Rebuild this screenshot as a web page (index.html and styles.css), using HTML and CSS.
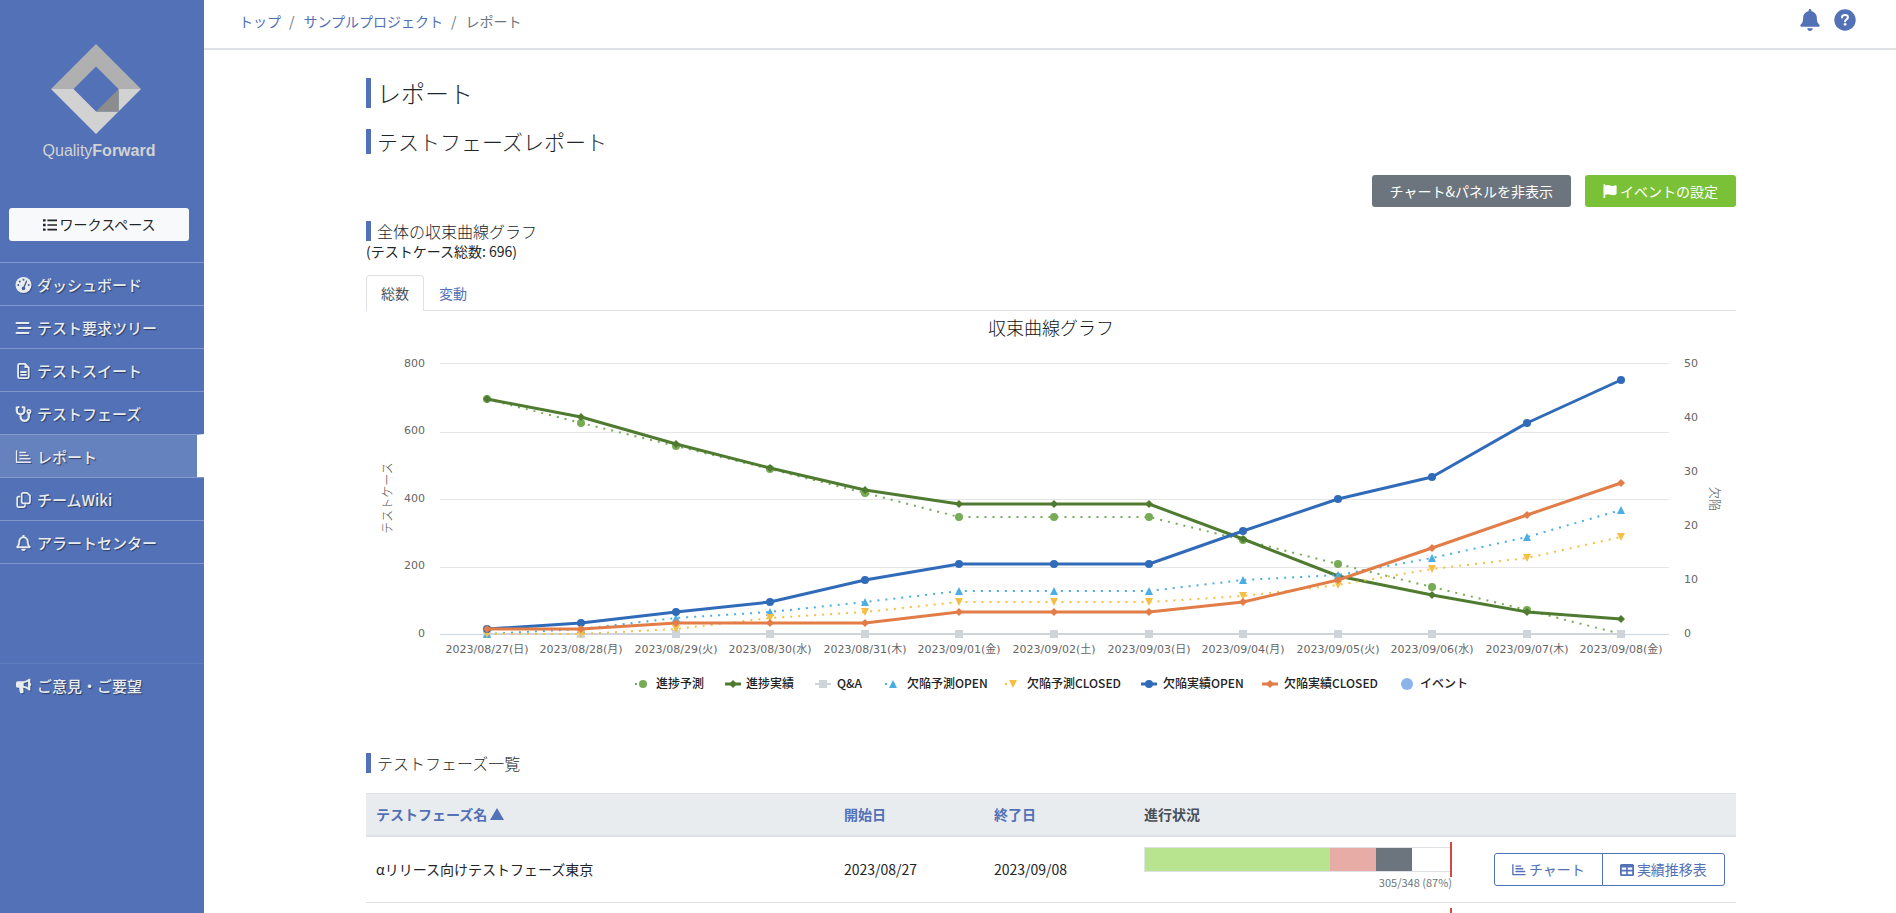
FILE: index.html
```html
<!DOCTYPE html>
<html lang="ja">
<head>
<meta charset="utf-8">
<title>レポート</title>
<link rel="stylesheet" href="styles.css">
</head>
<body>
<svg class="sprite" aria-hidden="true">
  <symbol id="i-chart" viewBox="0 0 16 16"><path d="M1 2v11.200h14M4.500 3.500h5.500M4.500 6.600h8M4.500 9.700h10" fill="none" stroke="currentColor" stroke-width="1.500" stroke-linecap="round" stroke-linejoin="round"/></symbol>
</svg>
<div class="layout">
  <aside class="sidebar">
    <a class="brand" href="#">
      <svg class="brand-mark" viewBox="0 0 90 90" aria-hidden="true">
        <path d="M0 45 45 0l45 45H67.500L45 22.500 22.500 45z" fill="#b0b0b0"/>
        <path d="M0 45h22.500L45 67.500h22.500V45H90L45 90z" fill="#d2d2d2"/>
        <path d="M67.500 45v22.500H45z" fill="#8c8c8c"/>
      </svg>
      <span class="brand-name">Quality<b>Forward</b></span>
    </a>
    <button class="workspace" type="button">
      <svg viewBox="0 0 14 14" aria-hidden="true"><path d="M0 1.200h2.600v2.400H0zM0 5.800h2.600v2.400H0zM0 10.400h2.600v2.400H0zM4.400 1.600H14v1.600H4.400zM4.400 6.200H14v1.600H4.400zM4.400 10.800H14v1.600H4.400z" fill="currentColor"/></svg>
      ワークスペース
    </button>
    <nav class="nav">
      <a href="#"><svg viewBox="0 0 16 16"><circle cx="8" cy="8" r="8" fill="currentColor"/><g fill="#4a5f90"><circle cx="8" cy="2.800" r="1"/><circle cx="4.300" cy="4.400" r="1"/><circle cx="2.800" cy="8" r="1"/><circle cx="13.200" cy="8" r="1"/></g><path d="M11 4.200 8.600 10" stroke="#4a5f90" stroke-width="1.400" stroke-linecap="round"/><circle cx="8" cy="11.400" r="1.800" fill="#4a5f90"/></svg>ダッシュボード</a>
      <a href="#"><svg viewBox="0 0 16 16"><path d="M1 3h12M3 8h12M1 13h12" stroke="currentColor" stroke-width="2" stroke-linecap="round"/></svg>テスト要求ツリー</a>
      <a href="#"><svg viewBox="0 0 16 16"><path d="M4 .900h5.500L13.200 4.600V13.700a1.400 1.400 0 0 1-1.400 1.400H4a1.400 1.400 0 0 1-1.400-1.400V2.300A1.400 1.400 0 0 1 4 .900zM5.500 9h5M5.500 11.800h5" fill="none" stroke="currentColor" stroke-width="1.800" stroke-linecap="round"/><path d="M9 1v4h4z" fill="currentColor"/></svg>テストスイート</a>
      <a href="#"><svg viewBox="0 0 16 16"><path d="M3 1.200 1.300 1.600V4.500a3.800 3.800 0 0 0 7.600 0V1.600L7.200 1.200M5.100 8.400v2.400a4 4 0 0 0 8.200 0V7" fill="none" stroke="currentColor" stroke-width="2.200" stroke-linecap="round" stroke-linejoin="round"/><circle cx="13.400" cy="5.400" r="1.700" fill="none" stroke="currentColor" stroke-width="1.600"/></svg>テストフェーズ</a>
      <a href="#" class="active" aria-current="page"><svg viewBox="0 0 16 16"><use href="#i-chart"/></svg>レポート</a>
      <a href="#"><svg viewBox="0 0 16 16"><path d="M7.500.900h4L14.500 3.700V10a1.300 1.300 0 0 1-1.300 1.300H7.500A1.300 1.300 0 0 1 6.200 10V2.200A1.300 1.300 0 0 1 7.500.900zM4 4.700H3A1.300 1.300 0 0 0 1.700 6v7.800A1.300 1.300 0 0 0 3 15.100h5.200a1.300 1.300 0 0 0 1.300-1.300v-.600" fill="none" stroke="currentColor" stroke-width="1.700" stroke-linecap="round" stroke-linejoin="round"/></svg>チームWiki</a>
      <a href="#"><svg viewBox="-32 0 512 512"><path fill="currentColor" stroke="currentColor" stroke-width="14" d="M439.390 362.290c-19.320-20.760-55.470-51.990-55.470-154.290 0-77.700-54.480-139.900-127.940-155.160V32c0-17.670-14.320-32-31.980-32s-31.980 14.330-31.980 32v20.840C118.560 68.100 64.080 130.300 64.080 208c0 102.300-36.150 133.530-55.470 154.290-6 6.450-8.660 14.160-8.610 21.710.110 16.400 12.980 32 32.100 32h383.800c19.120 0 32-15.600 32.100-32 .050-7.550-2.610-15.270-8.610-21.710zM67.530 368c21.220-27.970 44.420-74.330 44.530-159.420 0-.200-.060-.380-.060-.580 0-61.860 50.140-112 112-112s112 50.140 112 112c0 .200-.060.380-.060.580.110 85.100 23.310 131.460 44.530 159.420H67.530zM224 512c35.320 0 63.970-28.650 63.970-64H160.030c0 35.350 28.650 64 63.970 64z"/></svg>アラートセンター</a>
    </nav>
    <nav class="nav nav-feedback">
      <a href="#"><svg viewBox="0 0 16 16"><path d="M12.500 1.200 14.800.500v12.200l-2.300-.800C11.500 10.700 9.600 9.900 7.600 9.800l.500 3.800c.100 1-.400 1.700-1.300 1.700H5.400c-.500 0-.900-.300-1-.800L3.600 9.800H2.200A1.700 1.700 0 0 1 .500 8.100V5A1.700 1.700 0 0 1 2.200 3.300h4.600c2.200 0 4.400-.700 5.700-2.100zM12.600 3.600C11.300 4.500 9.700 5 8.200 5.100v2.900c1.600.100 3.100.600 4.400 1.500z" fill="currentColor" fill-rule="evenodd"/><path d="M14.300 5.200a1.500 1.500 0 0 1 0 2.800z" fill="currentColor" stroke="currentColor"/></svg>ご意見・ご要望</a>
    </nav>
  </aside>

  <div class="page">
    <header class="topbar">
      <ol class="crumbs">
        <li><a href="#">トップ</a></li>
        <li><a href="#">サンプルプロジェクト</a></li>
        <li>レポート</li>
      </ol>
      <div class="tools">
        <button type="button" aria-label="通知"><svg class="tool-icon" viewBox="-32 0 512 512"><path fill="currentColor" d="M224 512c35.320 0 63.970-28.650 63.970-64H160.030c0 35.350 28.650 64 63.970 64zm215.390-149.710c-19.320-20.760-55.470-51.990-55.470-154.290 0-77.700-54.480-139.900-127.940-155.160V32c0-17.670-14.320-32-31.980-32s-31.980 14.330-31.980 32v20.840C118.560 68.100 64.080 130.300 64.080 208c0 102.300-36.150 133.530-55.470 154.290-6 6.450-8.660 14.160-8.610 21.710.110 16.400 12.980 32 32.100 32h383.800c19.120 0 32-15.600 32.100-32 .050-7.550-2.610-15.270-8.610-21.710z"/></svg></button>
        <button type="button" aria-label="ヘルプ"><svg class="tool-icon" viewBox="0 0 22 22"><circle cx="11" cy="11" r="10.700" fill="currentColor"/><path d="M8 8.400C8.100 6.900 9.200 6.100 11 6.100c1.700 0 2.900.900 2.900 2.300 0 2-2.800 2.100-2.800 3.900" fill="none" stroke="#fff" stroke-width="2" stroke-linecap="round"/><circle cx="11.100" cy="15.300" r="1.400" fill="#fff"/></svg></button>
      </div>
    </header>

    <main class="content">
      <h2 class="title title-lg">レポート</h2>
      <h3 class="title title-md">テストフェーズレポート</h3>
      <div class="actions">
        <button class="btn btn-gray" type="button">チャート&amp;パネルを非表示</button>
        <button class="btn btn-green" type="button"><svg viewBox="0 0 14 14" aria-hidden="true"><path d="M1.300 0a.900.900 0 0 1 .900.900V1.500C4 .700 5.600.700 7.500 1.500c2 .800 3.400.600 5-.200.500-.300 1.100 0 1.100.600v7.700c0 .400-.200.700-.600.900-1.900.900-3.700.900-5.600.200-1.800-.700-3.300-.800-5.200 0V14H.500V.900A.900.900 0 0 1 1.300 0z" fill="currentColor"/></svg>イベントの設定</button>
      </div>

      <section>
        <h4 class="title title-sm">全体の収束曲線グラフ</h4>
        <p class="total">(テストケース総数: 696)</p>
        <div class="tabs" role="tablist">
          <button type="button" role="tab" aria-selected="true" class="tab tab-on">総数</button>
          <button type="button" role="tab" aria-selected="false" class="tab">変動</button>
        </div>
        <svg class="chart" viewBox="0 0 1370 400" role="img" aria-label="収束曲線グラフ">
          <defs>
            <marker id="m-fc" markerUnits="userSpaceOnUse" markerWidth="10" markerHeight="10" refX="5" refY="5"><circle cx="5" cy="5" r="4" fill="#77ab56"/></marker>
            <marker id="m-ac" markerUnits="userSpaceOnUse" markerWidth="10" markerHeight="10" refX="5" refY="5"><path d="M5 1l4 4-4 4-4-4z" fill="#4f7b31"/></marker>
            <marker id="m-qa" markerUnits="userSpaceOnUse" markerWidth="10" markerHeight="10" refX="5" refY="5"><path d="M1 1h8v8H1z" fill="#ced4da"/></marker>
            <marker id="m-fo" markerUnits="userSpaceOnUse" markerWidth="10" markerHeight="10" refX="5" refY="5"><path d="M5 1l4 8H1z" fill="#4bade6"/></marker>
            <marker id="m-fx" markerUnits="userSpaceOnUse" markerWidth="10" markerHeight="10" refX="5" refY="5"><path d="M5 9l4-8H1z" fill="#f5bf46"/></marker>
            <marker id="m-ro" markerUnits="userSpaceOnUse" markerWidth="10" markerHeight="10" refX="5" refY="5"><circle cx="5" cy="5" r="4" fill="#306bb9"/></marker>
            <marker id="m-rx" markerUnits="userSpaceOnUse" markerWidth="10" markerHeight="10" refX="5" refY="5"><path d="M5 1l4 4-4 4-4-4z" fill="#e27d48"/></marker>
          </defs>
          <text class="chart-title" x="685" y="24">収束曲線グラフ</text>
          <path class="grid" d="M74 52.500H1303M74 121.500H1303M74 188.500H1303M74 256.500H1303"/>
          <path class="axis" d="M74 323.500H1303"/>

          <polyline class="line dotted fc" points="121,88 215,112 310,135 404,158 499,182 593,206 688,206 783,206 877,229 972,253 1066,276 1161,299 1255,323"/>
          <polyline class="line ac" points="121,88 215,106 310,133 404,157 499,179 593,193 688,193 783,193 877,228 972,265 1066,284 1161,301 1255,308"/>
          <polyline class="line qa" points="121,323 215,323 310,323 404,323 499,323 593,323 688,323 783,323 877,323 972,323 1066,323 1161,323 1255,323"/>
          <polyline class="line dotted fo" points="121,323 215,318 310,307 404,301 499,291 593,280 688,280 783,280 877,269 972,264 1066,247 1161,226 1255,199"/>
          <polyline class="line dotted fx" points="121,323 215,323 310,318 404,307 499,301 593,291 688,291 783,291 877,285 972,274 1066,258 1161,247 1255,226"/>
          <polyline class="line ro" points="121,318 215,312 310,301 404,291 499,269 593,253 688,253 783,253 877,220 972,188 1066,166 1161,112 1255,69"/>
          <polyline class="line rx" points="121,318 215,318 310,312 404,312 499,312 593,301 688,301 783,301 877,291 972,269 1066,237 1161,204 1255,172"/>

          <g class="ticks ticks-left">
            <text x="59" y="56">800</text><text x="59" y="123">600</text><text x="59" y="191">400</text><text x="59" y="258">200</text><text x="59" y="326">0</text>
          </g>
          <g class="ticks">
            <text x="1318" y="56">50</text><text x="1318" y="110">40</text><text x="1318" y="164">30</text><text x="1318" y="218">20</text><text x="1318" y="272">10</text><text x="1318" y="326">0</text>
          </g>
          <g class="ticks ticks-dates">
            <text x="121" y="342">2023/08/27(日)</text><text x="215" y="342">2023/08/28(月)</text><text x="310" y="342">2023/08/29(火)</text><text x="404" y="342">2023/08/30(水)</text><text x="499" y="342">2023/08/31(木)</text><text x="593" y="342">2023/09/01(金)</text><text x="688" y="342">2023/09/02(土)</text><text x="783" y="342">2023/09/03(日)</text><text x="877" y="342">2023/09/04(月)</text><text x="972" y="342">2023/09/05(火)</text><text x="1066" y="342">2023/09/06(水)</text><text x="1161" y="342">2023/09/07(木)</text><text x="1255" y="342">2023/09/08(金)</text>
          </g>
          <text class="axis-name" transform="translate(26 187) rotate(-90)">テストケース</text>
          <text class="axis-name" transform="translate(1344 188) rotate(90)">欠陥</text>

          <g class="legend">
            <polyline class="line dotted fc mid" points="269,373 277,373 285,373"/><text x="290" y="377">進捗予測</text>
            <polyline class="line ac mid" points="359,373 367,373 375,373"/><text x="380" y="377">進捗実績</text>
            <polyline class="line qa mid" points="449,373 457,373 465,373"/><text x="471" y="377">Q&amp;A</text>
            <polyline class="line dotted fo mid" points="519,373 527,373 535,373"/><text x="541" y="377">欠陥予測OPEN</text>
            <polyline class="line dotted fx mid" points="639,373 647,373 655,373"/><text x="661" y="377">欠陥予測CLOSED</text>
            <polyline class="line ro mid" points="775,373 783,373 791,373"/><text x="797" y="377">欠陥実績OPEN</text>
            <polyline class="line rx mid" points="896,373 904,373 912,373"/><text x="918" y="377">欠陥実績CLOSED</text>
            <circle cx="1041" cy="373" r="6" fill="#8bb4ec"/><text x="1054" y="377">イベント</text>
          </g>
        </svg>
      </section>

      <section class="phases">
        <h4 class="title title-sm">テストフェーズ一覧</h4>
        <table class="table">
          <colgroup><col><col class="c-date"><col class="c-date"><col class="c-progress"><col class="c-actions"></colgroup>
          <thead>
            <tr>
              <th scope="col"><a href="#">テストフェーズ名 <svg class="sort" viewBox="0 0 14 12" aria-hidden="true"><path d="M7 0l7 12H0z" fill="currentColor"/></svg></a></th>
              <th scope="col"><a href="#">開始日</a></th>
              <th scope="col"><a href="#">終了日</a></th>
              <th scope="col">進行状況</th>
              <td></td>
            </tr>
          </thead>
          <tbody>
            <tr>
              <td>αリリース向けテストフェーズ東京</td>
              <td>2023/08/27</td>
              <td>2023/09/08</td>
              <td>
                <div class="progress">
                  <div class="bar"><span class="ok" style="width:60.6%"></span><span class="ng" style="width:15%"></span><span class="other" style="width:11.7%"></span></div>
                  <div class="progress-text">305/348 (87%)</div>
                </div>
              </td>
              <td>
                <div class="group">
                  <button class="btn btn-line" type="button"><svg viewBox="0 0 16 16" aria-hidden="true"><use href="#i-chart"/></svg>チャート</button>
                  <button class="btn btn-line" type="button"><svg viewBox="0 0 14 14" aria-hidden="true"><path fill-rule="evenodd" d="M1.500 1h11A1.500 1.500 0 0 1 14 2.500v9a1.500 1.500 0 0 1-1.500 1.500h-11A1.500 1.500 0 0 1 0 11.500v-9A1.500 1.500 0 0 1 1.500 1zM1.800 4.600v2.200h4.400V4.600zM7.800 4.600v2.200h4.400V4.600zM1.800 8.500v2.700h4.400V8.500zM7.800 8.500v2.700h4.400V8.500z" fill="currentColor"/></svg>実績推移表</button>
                </div>
              </td>
            </tr>
            <tr>
              <td></td><td></td><td></td>
              <td><div class="progress"><div class="bar"></div></div></td>
              <td></td>
            </tr>
          </tbody>
        </table>
      </section>
    </main>
  </div>
</div>
</body>
</html>
```
FILE: styles.css
```css
* { box-sizing: border-box; }

body {
  margin: 0;
  font: 400 14px/21px "Noto Sans CJK JP", sans-serif;
  color: #212529;
  background: #fff;
}
a { color: #5271b6; text-decoration: none; }
button { font: inherit; cursor: pointer; }
p { margin: 0; }
.sprite { position: absolute; width: 0; height: 0; }

.layout {
  display: grid;
  grid-template-columns: 204px 1fr;
  height: 100vh;
  overflow: hidden;
}

/* Sidebar */
.sidebar { background: #5271b6; }
.brand {
  display: flex;
  flex-direction: column;
  align-items: center;
  padding: 44px 13px 0 0;
  color: #d2d2d2;
}
.brand-mark { width: 90px; height: 90px; }
.brand-name {
  margin: 7px 0 0 7px;
  font: 300 16px/20px "Liberation Sans", sans-serif;
}
.brand-name b { font-weight: 700; }
.workspace {
  display: flex;
  align-items: center;
  justify-content: center;
  gap: 3px;
  width: 180px;
  height: 33px;
  margin: 47px 0 21px 9px;
  border: 0;
  border-radius: 3px;
  background: #f8f9fa;
  color: #212529;
}
.workspace svg { width: 14px; height: 14px; }
.nav { border-bottom: 1px solid #8199cb; }
.nav a {
  display: flex;
  align-items: center;
  gap: 5px;
  height: 43px;
  padding: 1px 0 0 15px;
  border-top: 1px solid #8199cb;
  color: #e9ecef;
  font-size: 15px;
  font-weight: 500;
  text-shadow: 1px 1px 1px #2b3c62;
}
.nav svg {
  width: 17px;
  height: 16px;
  filter: drop-shadow(1px 1px 0 #3a5187);
}
.nav .active {
  background: #6581be;
  border-right: 7px solid #fff;
}
.nav-feedback { margin-top: 99px; border-bottom: 0; }
.nav-feedback a { border-top-color: #5f7cbc; }

/* Top bar */
.page { min-width: 0; }
.topbar {
  display: flex;
  justify-content: space-between;
  height: 50px;
  padding: 9px 40px 0 35px;
  border-bottom: 2px solid #dee2e6;
}
.crumbs {
  display: flex;
  margin: 0;
  padding: 2px 0 0;
  list-style: none;
  color: #6c757d;
}
.crumbs li + li::before { content: "/"; padding: 0 9px 0 8px; }
.tools { display: flex; gap: 13px; }
.tools button {
  height: 22px;
  padding: 0;
  border: 0;
  background: none;
  color: #5271b6;
}
.tool-icon { display: block; width: 22px; height: 22px; }

/* Content */
.page { padding-left: 0; }
.content {
  max-width: 1372px;
  margin: 0 auto;
  padding: 28px 0 0 2px;
}
.title {
  margin: 0;
  padding-left: 6px;
  border-left: 5px solid #5271b6;
  font-weight: 300;
}
.title-lg { margin-bottom: 21px; font-size: 24px; line-height: 30px; }
.title-md { margin-bottom: 21px; font-size: 21px; line-height: 25px; }
.title-sm { font-size: 16px; line-height: 20px; }
.actions {
  display: flex;
  justify-content: flex-end;
  gap: 14px;
  margin-bottom: 14px;
}
.btn {
  display: inline-flex;
  align-items: center;
  gap: 3px;
  height: 32px;
  padding: 0 17px;
  border: 1px solid transparent;
  border-radius: 3px;
  color: #fff;
}
.btn svg { width: 14px; height: 14px; }
.btn-gray { background: #6c757d; }
.btn-green { background: #7bc137; }

.tabs {
  display: flex;
  margin-top: 13px;
  border-bottom: 1px solid #dee2e6;
}
.tab {
  height: 36px;
  margin-bottom: -1px;
  padding: 0 14px;
  border: 1px solid transparent;
  border-bottom: 0;
  border-radius: 4px 4px 0 0;
  background: none;
  color: #5271b6;
}
.tab-on { border-color: #dee2e6; background: #fff; color: #495057; }

/* Chart */
.chart { display: block; width: 100%; }
.chart-title { font: 300 18px "Noto Sans CJK JP", sans-serif; fill: #111; text-anchor: middle; }
.grid { stroke: #e6e6e6; }
.axis { stroke: #ccd6eb; }
.line { fill: none; stroke-width: 3px; stroke-linejoin: round; }
.dotted { stroke-width: 2px; stroke-dasharray: 2 6; }
.fc { stroke: #77ab56; marker: url(#m-fc); }
.ac { stroke: #4f7b31; marker: url(#m-ac); }
.qa { stroke: #ced4da; stroke-width: 2px; marker: url(#m-qa); }
.fo { stroke: #4bade6; marker: url(#m-fo); }
.fx { stroke: #f5bf46; marker: url(#m-fx); }
.ro { stroke: #306bb9; marker: url(#m-ro); }
.rx { stroke: #e27d48; marker: url(#m-rx); }
.line.mid { marker-start: none; marker-end: none; }
.ticks { font: 11px "DejaVu Sans", "Noto Sans CJK JP", sans-serif; fill: #666; }
.ticks-left { text-anchor: end; }
.ticks-dates { text-anchor: middle; }
.axis-name { font: 300 12px "Noto Sans CJK JP", sans-serif; fill: #444; text-anchor: middle; }
.legend { font: 500 12px "Noto Sans CJK JP", sans-serif; fill: #222; }

/* Phase table */
.phases { padding-top: 42px; }
.table {
  width: 100%;
  margin-top: 20px;
  border-collapse: collapse;
  table-layout: fixed;
}
.c-date { width: 150px; }
.c-progress { width: 350px; }
.c-actions { width: 252px; }
.table th, .table td {
  padding: 10px;
  text-align: left;
  border-top: 1px solid #dee2e6;
}
.table thead th, .table thead td {
  background: #e9ecef;
  border-bottom: 2px solid #dee2e6;
  color: #495057;
  font-weight: 700;
}
.sort { width: 14px; height: 12px; }
.progress { width: 308px; }
.bar {
  position: relative;
  display: flex;
  height: 25px;
  border: 1px solid #dee2e6;
  background: #fff;
}
.bar::after {
  content: "";
  position: absolute;
  top: -6px;
  right: -1px;
  width: 2px;
  height: 35px;
  background: #cf4b3f;
}
.ok { background: #b8e48f; }
.ng { background: #e8aca7; }
.other { background: #6c757d; }
.progress-text {
  font-size: 11px;
  line-height: 20px;
  text-align: right;
  color: #6c757d;
}
.group { display: flex; }
.btn-line {
  height: 33px;
  border-color: #5271b6;
  background: #fff;
  color: #5271b6;
}
.btn-line:first-child { border-radius: 3px 0 0 3px; }
.btn-line:last-child { margin-left: -1px; border-radius: 0 3px 3px 0; }
```
